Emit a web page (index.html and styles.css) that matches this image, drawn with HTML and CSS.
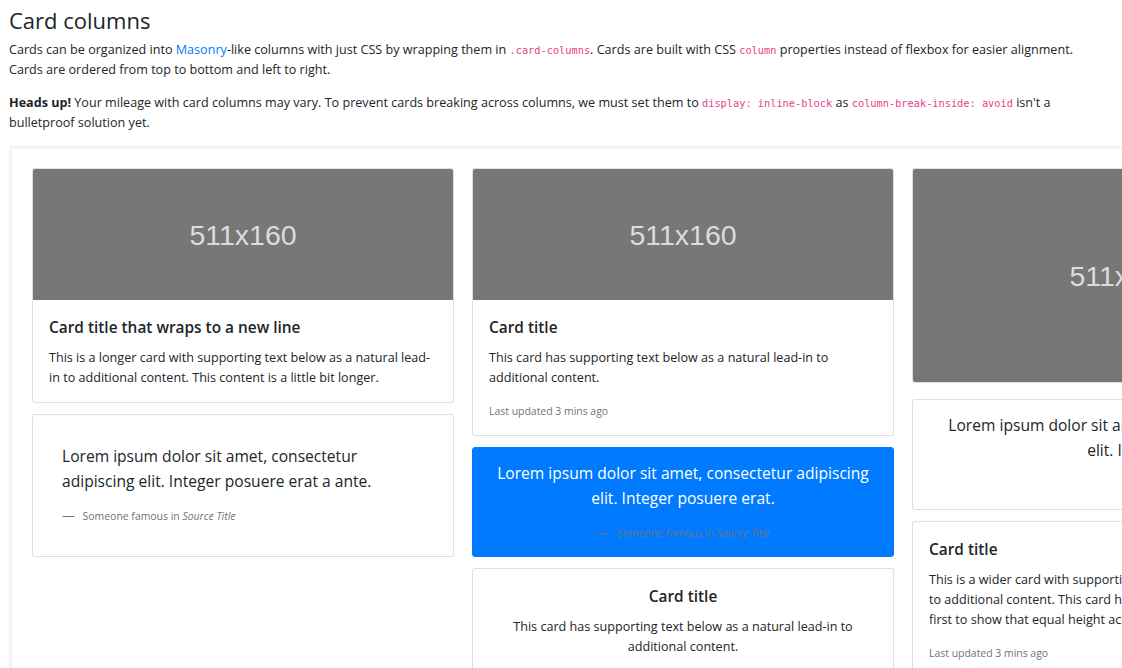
FILE: index.html
```html
<!DOCTYPE html>
<html lang="en">
<head>
<meta charset="utf-8">
<title>Card columns</title>
<link rel="stylesheet" href="styles.css">
</head>
<body>
<div class="page">
  <h2 class="page-title">Card columns</h2>
  <p class="lead-text">Cards can be organized into <a href="#" class="link">Masonry</a>-like columns with just CSS by wrapping them in <code>.card-columns</code>. Cards are built with CSS <code>column</code> properties instead of flexbox for easier alignment. Cards are ordered from top to bottom and left to right.</p>
  <p class="lead-text"><strong>Heads up!</strong> Your mileage with card columns may vary. To prevent cards breaking across columns, we must set them to <code>display: inline-block</code> as <code>column-break-inside: avoid</code> isn't a bulletproof solution yet.</p>

  <div class="example">
    <div class="card-columns">
      <div class="col">
        <div class="card">
          <div class="holder holder-160"><span>511x160</span></div>
          <div class="card-body">
            <h5 class="card-title">Card title that wraps to a new line</h5>
            <p class="card-text">This is a longer card with supporting text below as a natural lead-in to additional content. This content is a little bit longer.</p>
          </div>
        </div>
        <div class="card p-3">
          <blockquote class="blockquote card-body">
            <p>Lorem ipsum dolor sit amet, consectetur adipiscing elit. Integer posuere erat a ante.</p>
            <footer class="blockquote-footer"><small class="text-muted">Someone famous in <cite>Source Title</cite></small></footer>
          </blockquote>
        </div>
      </div>

      <div class="col">
        <div class="card">
          <div class="holder holder-160"><span>511x160</span></div>
          <div class="card-body">
            <h5 class="card-title">Card title</h5>
            <p class="card-text">This card has supporting text below as a natural lead-in to additional content.</p>
            <p class="card-text"><small class="text-muted">Last updated 3 mins ago</small></p>
          </div>
        </div>
        <div class="card card-primary p-3 text-center">
          <blockquote class="blockquote">
            <p>Lorem ipsum dolor sit amet, consectetur adipiscing elit. Integer posuere erat.</p>
            <footer class="blockquote-footer"><small>Someone famous in <cite>Source Title</cite></small></footer>
          </blockquote>
        </div>
        <div class="card text-center">
          <div class="card-body">
            <h5 class="card-title">Card title</h5>
            <p class="card-text">This card has supporting text below as a natural lead-in to additional content.</p>
            <p class="card-text"><small class="text-muted">Last updated 3 mins ago</small></p>
          </div>
        </div>
      </div>

      <div class="col">
        <div class="card card-img-only">
          <div class="holder holder-260"><span>511x260</span></div>
        </div>
        <div class="card p-3 text-right">
          <blockquote class="blockquote">
            <p>Lorem ipsum dolor sit amet, consectetur adipiscing elit. Integer posuere erat a ante.</p>
            <footer class="blockquote-footer"><small class="text-muted">Someone famous in <cite>Source Title</cite></small></footer>
          </blockquote>
        </div>
        <div class="card">
          <div class="card-body">
            <h5 class="card-title">Card title</h5>
            <p class="card-text">This is a wider card with supporting text below as a natural lead-in to additional content. This card has even longer content than the first to show that equal height action.</p>
            <p class="card-text"><small class="text-muted">Last updated 3 mins ago</small></p>
          </div>
        </div>
      </div>
    </div>
  </div>
</div>
</body>
</html>
```

FILE: styles.css
```css
html, body {
  margin: 0;
  padding: 0;
  overflow: hidden;
  background: #fff;
}

body {
  font-family: "Open Sans", "Noto Sans", sans-serif;
  font-size: 12.6px;
  line-height: 20px;
  color: #212529;
}

.page {
  padding: 5px 9px 0 9px;
}

.page-title {
  margin: 0 0 5px 0;
  font-size: 22px;
  line-height: 30px;
  font-weight: 500;
  color: #212529;
}

.lead-text {
  margin: 0 0 13px 0;
  max-width: 1085px;
}

.link {
  color: #007bff;
  text-decoration: none;
}

code {
  font-family: "DejaVu Sans Mono", "Liberation Mono", monospace;
  font-size: 10.3px;
  color: #e83e8c;
}

strong {
  font-weight: 700;
}

.example {
  margin-top: 13px;
  width: 1302px;
  border: 3px solid #f5f5f7;
  padding: 19px 20px 20px 20px;
}

.card-columns {
  display: flex;
  gap: 18px;
  align-items: flex-start;
}

.col {
  width: 422px;
  display: flex;
  flex-direction: column;
  gap: 11px;
}

.card {
  display: flex;
  flex-direction: column;
  border: 1px solid rgba(0, 0, 0, 0.125);
  border-radius: 3px;
  background: #fff;
  overflow: hidden;
}

.card-img-only {
  margin-bottom: 5px;
}

.holder {
  background: #777777;
  color: #dcdcdc;
  font-family: "Liberation Sans", Arial, sans-serif;
  font-size: 28.5px;
  display: flex;
  align-items: center;
  justify-content: center;
}

.holder-160 {
  height: 131px;
}

.holder-260 {
  height: 213px;
}

.card-body {
  padding: 18px 16px 14px 16px;
}

.card-title {
  margin: 0 0 10px 0;
  font-size: 15.4px;
  line-height: 20px;
  font-weight: 600;
  color: #212529;
}

.card-text {
  margin: 0 0 13px 0;
}

.card-text:last-child {
  margin-bottom: 0;
}

.text-muted {
  color: #6c757d;
}

small {
  font-size: 83%;
}

.p-3 {
  padding: 13px;
}

.p-3 > .card-body {
  padding: 16px;
}

.blockquote {
  margin: 0;
  font-size: 15.6px;
  line-height: 24.6px;
}

.blockquote p {
  margin: 0 0 13px 0;
}

.blockquote-footer {
  display: block;
  font-size: 12.6px;
  line-height: 19.7px;
  color: #6c757d;
}

.blockquote-footer::before {
  content: "\2014";
  display: inline-block;
  margin-right: 8px;
}

cite {
  font-style: italic;
}

.card-primary {
  background: #007bff;
  border-color: #007bff;
  color: #fff;
  padding-bottom: 12px;
}

.card-primary .blockquote-footer {
  color: #6c757d;
}

.text-center {
  text-align: center;
}

.text-right {
  text-align: right;
}
```
